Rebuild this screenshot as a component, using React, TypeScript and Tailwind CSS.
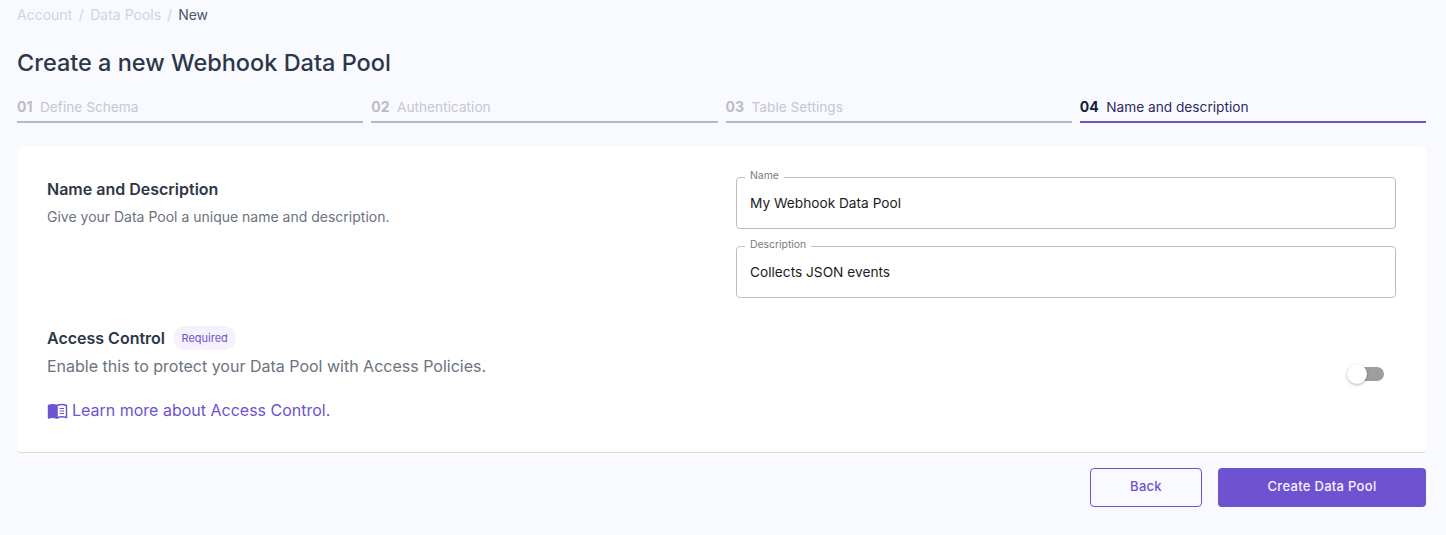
import { ReactNode } from 'react';

const FONT = "font-['Inter',sans-serif]";

const steps = [
  { num: '01', label: 'Define Schema' },
  { num: '02', label: 'Authentication' },
  { num: '03', label: 'Table Settings' },
  { num: '04', label: 'Name and description', active: true },
];

function Step({ num, label, active }: { num: string; label: string; active?: boolean }) {
  return (
    <div className={`flex-1 h-[32px] border-b-2 flex items-start pt-[6px] ${active ? 'border-[#6f52cf]' : 'border-[#b7b6c8]'}`}>
      <span className={`text-[14px] leading-[20px] font-bold mr-[7.5px] ${active ? 'text-[#14213a]' : 'text-[#bcbcc9]'}`}>{num}</span>
      <span className={`text-[13.7px] leading-[20px] ${active ? 'text-[#2d2a5c]' : 'text-[#c6c6d4]'}`}>{label}</span>
    </div>
  );
}

function Field({ label, value, children }: { label: string; value: string; children?: ReactNode }) {
  return (
    <fieldset className="h-[58px] -mt-[6px] border border-[#bdbdbd] rounded-[4px] px-[8px]">
      <legend className="text-[10.4px] leading-[12px] text-[#777b82] px-[5px] ml-0 -translate-y-[1px]">{label}</legend>
      <div className="text-[13.7px] leading-[20px] text-[#1c1c22] pl-[5px] pt-[10px]">{value}</div>
      {children}
    </fieldset>
  );
}

function BookIcon() {
  return (
    <svg width="21" height="16" viewBox="0 0 21 16" className="mr-[4px] mt-[5px] shrink-0">
      <path d="M1.5 2.5 C4 1.5 7 1.5 10 2.5 V15 C7 14 4 14 1.5 15 Z" fill="#6f52cf" stroke="#6f52cf" strokeWidth="1.4" strokeLinejoin="round" />
      <path d="M10 2.5 C12.5 1.2 16 1.2 19.5 2.5 V14.5 C16 13.5 12.5 13.8 10 15 Z" fill="#fff" stroke="#6f52cf" strokeWidth="1.5" strokeLinejoin="round" />
      <path d="M12.5 5.5 H17 M12.5 8 H17 M12.5 10.5 H17" stroke="#6f52cf" strokeWidth="1.1" />
    </svg>
  );
}

export default function App() {
  return (
    <div className={`${FONT} w-[1446px] h-[535px] overflow-hidden bg-[#f9faff] pl-[17px] pr-[20px]`}>
      <nav className="flex items-center h-[30px] text-[14px] leading-[20px] text-[#cfd4e0]">
        <span>Account</span>
        <span className="mx-[6.5px]">/</span>
        <span>Data Pools</span>
        <span className="mx-[6px]">/</span>
        <span className="text-[#4a5568]">New</span>
      </nav>

      <h1 className="mt-[17px] text-[23.5px] leading-[32px] font-medium text-[#2d3748]">Create a new Webhook Data Pool</h1>

      <div className="mt-[12px] flex gap-[8px]">
        {steps.map((s) => (
          <Step key={s.num} {...s} />
        ))}
      </div>

      <section className="mt-[24px] h-[306px] bg-white rounded-[4px] border-b border-[#dcdcdc] px-[30px] pt-[30px]">
        <div className="flex">
          <div className="w-[689px]">
            <h2 className="text-[16px] leading-[24px] font-semibold text-[#2d3748]">Name and Description</h2>
            <p className="mt-[6px] text-[14px] leading-[20px] text-[#6b7280]">Give your Data Pool a unique name and description.</p>
          </div>
          <div className="flex-1 flex flex-col gap-[17px]">
            <Field label="Name" value="My Webhook Data Pool" />
            <Field label="Description" value="Collects JSON events" />
          </div>
        </div>

        <div className="mt-[27px] flex items-start justify-between">
          <div>
            <div className="flex items-center h-[26px]">
              <span className="text-[16px] leading-[24px] font-semibold text-[#2d3748]">Access Control</span>
              <span className="ml-[8px] h-[24px] px-[8.5px] rounded-full bg-[#f5f2fd] text-[11px] leading-[24px] text-[#6f52cf]">Required</span>
            </div>
            <p className="mt-[3px] text-[16px] leading-[24px] text-[#6b7280]">Enable this to protect your Data Pool with Access Policies.</p>
            <a className="mt-[20px] flex text-[16px] leading-[24px] text-[#6f52cf]">
              <BookIcon />
              Learn more about Access Control.
            </a>
          </div>
          <div className="relative mt-[42px] mr-[12px] w-[36px] h-[14px] rounded-full bg-[#9e9e9e]">
            <span className="absolute -left-[1px] -top-[3px] w-[20px] h-[20px] rounded-full bg-white shadow-[0_1px_3px_rgba(0,0,0,0.3)]" />
          </div>
        </div>
      </section>

      <div className="mt-[15px] flex justify-end gap-[16px]">
        <button className="w-[112px] h-[39px] pb-[1px] rounded-[4px] border border-[#6f52cf] text-[13px] font-medium tracking-[0.3px] text-[#6f52cf]">Back</button>
        <button className="w-[208px] h-[39px] pb-[1px] rounded-[4px] bg-[#6f52cf] text-[13px] font-medium tracking-[0.3px] text-[#f5f3ff]">Create Data Pool</button>
      </div>
    </div>
  );
}
